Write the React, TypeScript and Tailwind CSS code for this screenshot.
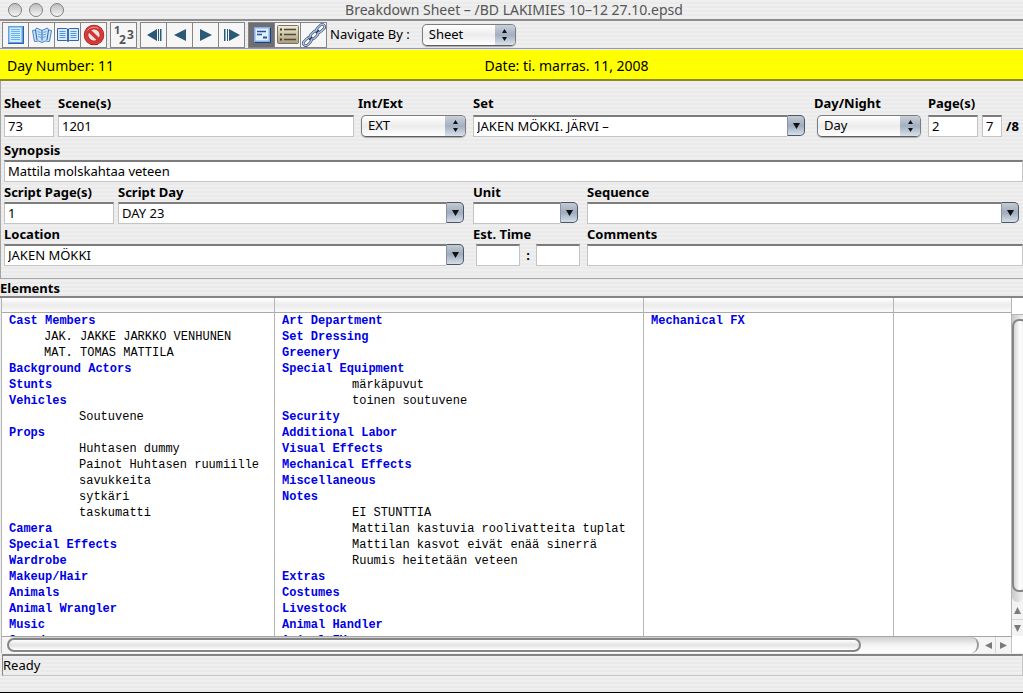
import { useState, type ReactNode } from "react"

type Line = { text: string; level: 0 | 1 | 2 }

const head = (text: string): Line => ({ text, level: 0 })
const cast = (text: string): Line => ({ text, level: 1 })
const item = (text: string): Line => ({ text, level: 2 })

const columns: Line[][] = [
  [
    head("Cast Members"),
    cast("JAK. JAKKE JARKKO VENHUNEN"),
    cast("MAT. TOMAS MATTILA"),
    head("Background Actors"),
    head("Stunts"),
    head("Vehicles"),
    item("Soutuvene"),
    head("Props"),
    item("Huhtasen dummy"),
    item("Painot Huhtasen ruumiille"),
    item("savukkeita"),
    item("sytkäri"),
    item("taskumatti"),
    head("Camera"),
    head("Special Effects"),
    head("Wardrobe"),
    head("Makeup/Hair"),
    head("Animals"),
    head("Animal Wrangler"),
    head("Music"),
    head("Sound"),
  ],
  [
    head("Art Department"),
    head("Set Dressing"),
    head("Greenery"),
    head("Special Equipment"),
    item("märkäpuvut"),
    item("toinen soutuvene"),
    head("Security"),
    head("Additional Labor"),
    head("Visual Effects"),
    head("Mechanical Effects"),
    head("Miscellaneous"),
    head("Notes"),
    item("EI STUNTTIA"),
    item("Mattilan kastuvia roolivatteita tuplat"),
    item("Mattilan kasvot eivät enää sinerrä"),
    item("Ruumis heitetään veteen"),
    head("Extras"),
    head("Costumes"),
    head("Livestock"),
    head("Animal Handler"),
    head("Animal FX"),
  ],
  [head("Mechanical FX")],
  [],
]

const levelStyle = {
  0: "font-bold text-[#0000e6]",
  1: "pl-[35px] text-black",
  2: "pl-[70px] text-black",
}

const stripes = "bg-[repeating-linear-gradient(180deg,#efefef_0px,#efefef_2px,#eaeaea_2px,#eaeaea_4px)]"
const box =
  "h-[22px] min-w-0 border border-t-2 border-[#c4c4c4] border-t-[#7c7c7c] bg-white px-[3px] pb-0.5 text-[13px] leading-4 text-black outline-none"

function Label({ htmlFor, tall, children }: { htmlFor: string; tall?: boolean; children: ReactNode }) {
  return (
    <label
      htmlFor={htmlFor}
      className={`block text-[13px] leading-5 font-bold whitespace-nowrap ${tall ? "h-[22px]" : "h-5"}`}
    >
      {children}
    </label>
  )
}

function Popup({ id, options, className }: { id: string; options: string[]; className: string }) {
  return (
    <div className={`relative h-[22px] ${className}`}>
      <select
        id={id}
        className="block h-full w-full appearance-none rounded-[5px] border border-[#7d7d7d] border-b-[#5c5c5c] bg-linear-to-b from-white via-[#ececec] to-white pb-0.5 pl-1.5 text-[13px] leading-[18px] text-black shadow-[0_1px_1px_#aaa]"
      >
        {options.map((o) => (
          <option key={o}>{o}</option>
        ))}
      </select>
      <span className="pointer-events-none absolute inset-y-px right-px flex w-5 items-center justify-center rounded-r-[4px] bg-linear-to-b from-[#c9d0da] via-[#a3afc0] to-[#d9e2ec]">
        <svg width="7" height="12" viewBox="0 0 7 12">
          <path d="M3.5 0L6 4H1zM3.5 12L6 8H1z" fill="#111" />
        </svg>
      </span>
    </div>
  )
}

function Combo({ id, value }: { id: string; value?: string }) {
  return (
    <div className="flex h-[22px]">
      <input id={id} defaultValue={value} className={`${box} flex-1 border-r-0`} />
      <button
        type="button"
        aria-label="Show choices"
        className="flex h-[21px] w-[18px] items-center justify-center rounded-r-[5px] border border-[#4c5562] border-l-[#8a93a0] bg-linear-to-b from-[#c3cad4] via-[#9facbd] to-[#d5dfea]"
      >
        <svg width="7" height="6" viewBox="0 0 7 6">
          <path d="M0 0H7L3.5 6z" fill="#111" />
        </svg>
      </button>
    </div>
  )
}

function ToolButton({ label, active, children }: { label: string; active?: boolean; children: ReactNode }) {
  return (
    <button
      aria-label={label}
      className={`-mr-px flex h-[26px] w-[27px] items-center justify-center border border-[#858585] ${
        active ? "bg-[#6e6e73]" : "bg-[#f6f6f6]"
      }`}
    >
      {children}
    </button>
  )
}

function SheetIcon() {
  return (
    <svg width="22" height="22" viewBox="0 0 22 22">
      <rect x="3" y="2" width="16" height="18" fill="#2d5fa8" />
      <rect x="3" y="2" width="15" height="17" fill="#5fa3e6" />
      <rect x="4.5" y="3.5" width="12" height="14.5" fill="#d2ecff" />
      <path d="M6 5.500h9M6 7.500h9M6 9.500h9M6 11.500h9M6 13.500h9M6 15.500h9" stroke="#67b2ee" />
    </svg>
  )
}

function FlipBookIcon() {
  return (
    <svg width="22" height="22" viewBox="0 0 22 22" fill="none">
      <path d="M1.500 6.500l3-.5 1-2 5.500 2.500 5.500-2.500 1 2 3 .5-2 11-4-.5-3.500 1.500-3.500-1.500-4 .5z" fill="#c8e4fb" stroke="#4a83ca" />
      <path d="M11 6.500v10M4.500 6l1.500 10M17.500 6l-1.500 10" stroke="#2d5fa8" />
      <path d="M6.500 7.500l3 1M7 10l3 1M7 12.500l3 1M15.500 7.500l-3 1M15 10l-3 1M15 12.500l-3 1" stroke="#62a8e8" />
    </svg>
  )
}

function OpenBookIcon() {
  return (
    <svg width="24" height="22" viewBox="0 0 24 22">
      <path d="M1.500 4.500h9l1.500 1 1.500-1h9v12h-9l-1.500 1-1.500-1h-9z" fill="#d5ebfc" stroke="#3264ae" />
      <path d="M12 5v12" stroke="#173f7c" strokeWidth="1.500" />
      <path
        d="M3.500 7.500h6M3.500 9.500h6M3.500 11.500h6M3.500 13.500h6M14.500 7.500h6M14.500 9.500h6M14.500 11.500h6M14.500 13.500h6"
        stroke="#4f96dc"
      />
    </svg>
  )
}

function ForbiddenIcon() {
  return (
    <svg width="22" height="22" viewBox="0 0 22 22" fill="none">
      <circle cx="11" cy="11" r="8" fill="#f1dede" stroke="#8c1a1a" strokeWidth="4.500" />
      <circle cx="11" cy="11" r="8" stroke="#d83a38" strokeWidth="3.500" />
      <path d="M5.500 6l11 10.500" stroke="#d03432" strokeWidth="3.500" />
      <path d="M4.500 6.500a8 8 0 0 1 11-2" stroke="#f09a96" />
    </svg>
  )
}

function FormIcon() {
  return (
    <svg width="22" height="22" viewBox="0 0 22 22">
      <rect x="4" y="4" width="16" height="15" fill="#1f3f77" />
      <rect x="3" y="3" width="16" height="15" fill="#83afea" />
      <rect x="4.500" y="4.500" width="13" height="12" fill="#e2efff" />
      <path d="M6 7.500h9M6 10.500h5" stroke="#2752a0" strokeWidth="1.500" />
      <path d="M12 13.500h4" stroke="#2752a0" strokeWidth="2" />
    </svg>
  )
}

function ListIcon() {
  return (
    <svg width="24" height="22" viewBox="0 0 24 22">
      <defs>
        <linearGradient id="listFill" x1="0" y1="0" x2="0" y2="1">
          <stop offset="0" stopColor="#f2ecd2" />
          <stop offset="1" stopColor="#a89c7b" />
        </linearGradient>
      </defs>
      <rect x="1.500" y="1.500" width="21" height="18" rx="1" fill="url(#listFill)" stroke="#7b745e" />
      <path d="M4 5.500h2M4 10.500h2M4 15.500h2" stroke="#3d392c" strokeWidth="2" />
      <path d="M8 5.500h12M8 10.500h12M8 15.500h12" stroke="#4e4a3c" strokeWidth="1.500" />
    </svg>
  )
}

function ChainIcon() {
  return (
    <svg width="24" height="24" viewBox="0 0 24 24" fill="none">
      <g transform="rotate(-45 12 12)">
        <g fill="#fff" stroke="#34497c" strokeWidth="2.500">
          <rect x="-2" y="9.500" width="9" height="5" rx="2.500" />
          <rect x="7.500" y="9.500" width="9" height="5" rx="2.500" />
          <rect x="17" y="9.500" width="9" height="5" rx="2.500" />
        </g>
        <g stroke="#c3cfe2" strokeWidth="1.200">
          <rect x="-2" y="9.500" width="9" height="5" rx="2.500" />
          <rect x="7.500" y="9.500" width="9" height="5" rx="2.500" />
          <rect x="17" y="9.500" width="9" height="5" rx="2.500" />
        </g>
        <path d="M5 12h4.500M14.500 12h4.500" stroke="#20366b" strokeWidth="1.500" />
      </g>
    </svg>
  )
}

function Arrow({ d }: { d: string }) {
  return (
    <svg width="20" height="16" viewBox="0 0 20 16">
      <path d={d} fill="#2a5a76" />
    </svg>
  )
}

function Toolbar() {
  return (
    <div className={`flex h-[28px] items-center gap-1 border-b border-[#9a9a9a] pl-0.5 ${stripes}`}>
      <div className="flex">
        <ToolButton label="Sheet"><SheetIcon /></ToolButton>
        <ToolButton label="Flip pages"><FlipBookIcon /></ToolButton>
        <ToolButton label="Open book"><OpenBookIcon /></ToolButton>
        <ToolButton label="Remove"><ForbiddenIcon /></ToolButton>
      </div>
      <div className="flex">
        <ToolButton label="Renumber">
          <svg width="22" height="22" viewBox="0 0 22 22" fill="#555" fontFamily="Noto Sans" fontWeight="bold">
            <text x="1" y="10" fontSize="11">1</text>
            <text x="6" y="20" fontSize="12">2</text>
            <text x="14" y="15" fontSize="12">3</text>
          </svg>
        </ToolButton>
      </div>
      <div className="flex">
        <ToolButton label="First"><Arrow d="M3 8L13 2V14zM14 2h1v12h-1zM16 2h1.500v12H16z" /></ToolButton>
        <ToolButton label="Previous"><Arrow d="M4 8L16 2V14z" /></ToolButton>
        <ToolButton label="Next"><Arrow d="M16 8L4 2V14z" /></ToolButton>
        <ToolButton label="Last"><Arrow d="M18 8L7 2V14zM5 2h1v12H5zM2 2h1.500v12H2z" /></ToolButton>
      </div>
      <div className="flex">
        <ToolButton label="Form view" active><FormIcon /></ToolButton>
        <ToolButton label="List view"><ListIcon /></ToolButton>
        <ToolButton label="Link"><ChainIcon /></ToolButton>
      </div>
      <label htmlFor="navigate" className="mr-2 text-[13px] whitespace-nowrap">Navigate By :</label>
      <Popup id="navigate" options={["Sheet", "Scene"]} className="w-[94px]" />
    </div>
  )
}

function SheetForm() {
  return (
    <form className={`border-b border-l border-[#a5a5a5] pt-3 pb-3 pl-[3px] ${stripes}`}>
      <div className="mb-[3px] grid grid-cols-[54px_300fr_115px_341fr_114px_95px]">
        <div className="pr-1">
          <Label htmlFor="sheet" tall>Sheet</Label>
          <input id="sheet" defaultValue="73" className={`${box} block w-full`} />
        </div>
        <div className="pr-1">
          <Label htmlFor="scenes" tall>Scene(s)</Label>
          <input id="scenes" defaultValue="1201" className={`${box} block w-full`} />
        </div>
        <div>
          <Label htmlFor="intext" tall>Int/Ext</Label>
          <Popup id="intext" options={["EXT", "INT"]} className="mr-[7px] ml-[3px]" />
        </div>
        <div className="pr-[9px]">
          <Label htmlFor="set" tall>Set</Label>
          <Combo id="set" value="JAKEN MÖKKI. JÄRVI –" />
        </div>
        <div>
          <Label htmlFor="daynight" tall>Day/Night</Label>
          <Popup id="daynight" options={["Day", "Night"]} className="mr-[7px] ml-[3px]" />
        </div>
        <div>
          <Label htmlFor="pages" tall>Page(s)</Label>
          <div className="flex gap-1">
            <input id="pages" defaultValue="2" className={`${box} w-[50px]`} />
            <input aria-label="Eighths" defaultValue="7" className={`${box} w-5`} />
            <span className="text-[13px] leading-[22px] font-bold">/8</span>
          </div>
        </div>
      </div>
      <div>
        <Label htmlFor="synopsis">Synopsis</Label>
        <input id="synopsis" defaultValue="Mattila molskahtaa veteen" className={`${box} block w-full`} />
      </div>
      <div className="grid grid-cols-[114px_355fr_114px_436fr]">
        <div className="pr-1">
          <Label htmlFor="scriptpages">Script Page(s)</Label>
          <input id="scriptpages" defaultValue="1" className={`${box} block w-full`} />
        </div>
        <div className="pr-[9px]">
          <Label htmlFor="scriptday">Script Day</Label>
          <Combo id="scriptday" value="DAY 23" />
        </div>
        <div className="pr-[9px]">
          <Label htmlFor="unit">Unit</Label>
          <Combo id="unit" />
        </div>
        <div className="pr-1">
          <Label htmlFor="sequence">Sequence</Label>
          <Combo id="sequence" />
        </div>
        <div className="col-span-2 pr-[9px]">
          <Label htmlFor="location">Location</Label>
          <Combo id="location" value="JAKEN MÖKKI" />
        </div>
        <div>
          <Label htmlFor="hours">Est. Time</Label>
          <div className="flex pl-[3px] text-[13px] leading-[22px] font-bold">
            <input id="hours" className={`${box} w-11`} />
            <span className="w-4 text-center">:</span>
            <input aria-label="Minutes" className={`${box} w-11`} />
          </div>
        </div>
        <div>
          <Label htmlFor="comments">Comments</Label>
          <input id="comments" className={`${box} block w-full`} />
        </div>
      </div>
    </form>
  )
}

function ElementsPane() {
  return (
    <div className="ml-px grid min-h-0 flex-1 grid-cols-[1fr_11px] grid-rows-[minmax(0,1fr)_17px] border-l border-[#b5b5b5] bg-white">
      <div className="grid min-h-0 grid-cols-[273fr_369fr_250fr_118fr] overflow-hidden">
        {columns.map((lines, i) => (
          <div key={i} className="min-w-0 border-r border-[#b5b5b5]">
            <div className="h-[15px] border-b border-[#a9a9a9] bg-linear-to-b from-white via-[#ececec] to-[#fafafa]" />
            <ul className="pl-[7px] font-['Liberation_Mono','Courier_New',monospace] text-[12px] leading-4 whitespace-pre">
              {lines.map((l) => (
                <li key={l.text} className={levelStyle[l.level]}>{l.text}</li>
              ))}
            </ul>
          </div>
        ))}
      </div>
      <div className="mt-4 flex flex-col overflow-hidden border-t border-[#b5b5b5] bg-[#f3f3f3]">
        <div className="flex flex-1 flex-col rounded-b-[8px] bg-linear-to-r from-[#c9c9c9] to-[#f0f0f0] pb-2.5">
          <div className="mt-1 w-4 flex-1 rounded-[7px] border-2 border-[#858585] bg-linear-to-r from-[#d5d5d5] via-white to-[#e5e5e5]" />
        </div>
        <button aria-label="Scroll up" className="flex h-[18px] items-center justify-center border-b border-[#d5d5d5]">
          <svg width="7" height="7" viewBox="0 0 7 7"><path d="M3.500 0L7 7H0z" fill="#7b7b7b" /></svg>
        </button>
        <button aria-label="Scroll down" className="flex h-4 items-center justify-center">
          <svg width="7" height="7" viewBox="0 0 7 7"><path d="M3.500 7L7 0H0z" fill="#7b7b7b" /></svg>
        </button>
      </div>
      <div className="flex border-t border-[#a5a5a5] bg-[#f5f5f5]">
        <div className="mr-0.5 ml-[5px] flex flex-1 rounded-[8px] border-r-2 border-[#9a9a9a] bg-linear-to-b from-[#cfcfcf] via-[#f4f4f4] to-white">
          <div className="my-px h-[14px] w-[88%] rounded-[7px] border-2 border-[#858585] bg-linear-to-b from-white via-[#e2e2e2] to-white" />
        </div>
        <button aria-label="Scroll left" className="flex w-[15px] items-center justify-center border-r border-[#d5d5d5]">
          <svg width="7" height="7" viewBox="0 0 7 7"><path d="M0 3.500L7 0V7z" fill="#7b7b7b" /></svg>
        </button>
        <button aria-label="Scroll right" className="flex w-4 items-center justify-center border-r border-[#c5c5c5]">
          <svg width="7" height="7" viewBox="0 0 7 7"><path d="M7 3.500L0 0V7z" fill="#7b7b7b" /></svg>
        </button>
      </div>
    </div>
  )
}

export default function App() {
  const [dayNumber] = useState(11)

  return (
    <div className={`flex h-screen flex-col overflow-hidden border-b border-black font-['Noto_Sans','Lucida_Grande',sans-serif] text-[13px] text-black ${stripes}`}>
      <header className="flex h-[21px] items-center border-b-2 border-[#8e8e8e] pl-2">
        <div className="flex w-[57px] gap-[7px]">
          {["Close", "Minimize", "Zoom"].map((name) => (
            <button
              key={name}
              aria-label={name}
              className="size-[14px] rounded-full border border-[#808080] bg-linear-to-b from-[#bdbdbd] to-[#f5f5f5]"
            />
          ))}
        </div>
        <h1 className="flex-1 pr-[60px] text-center text-[14px] leading-[19px] text-[#555]">
          Breakdown Sheet – /BD LAKIMIES 10–12 27.10.epsd
        </h1>
      </header>
      <Toolbar />
      <div className="mt-px flex h-[31px] items-center border-b-2 border-[#8a8a20] bg-[#ffff00] pt-0.5 pl-[7px] text-[14px]">
        <p className="w-[47%]">Day Number: {dayNumber}</p>
        <p>Date: ti. marras. 11, 2008</p>
      </div>
      <SheetForm />
      <h2 className="h-[19px] border-b-2 border-[#858585] leading-[18px] font-bold">Elements</h2>
      <ElementsPane />
      <footer className="mt-px mb-4 ml-0.5 h-[22px] border border-t-2 border-[#c5c5c5] border-t-[#858585] border-l-[#858585] leading-[18px]">
        Ready
      </footer>
    </div>
  )
}
